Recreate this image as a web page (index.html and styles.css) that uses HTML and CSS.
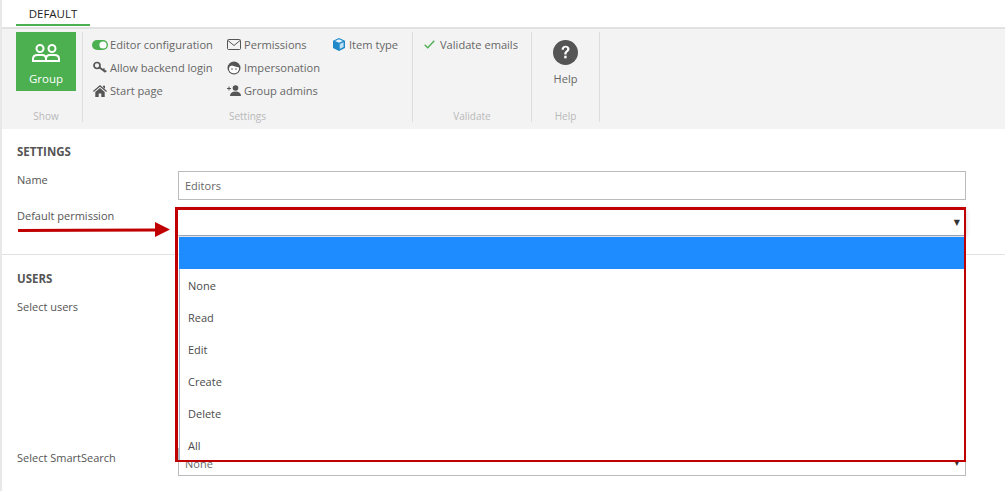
FILE: index.html
```html
<!DOCTYPE html>
<html lang="en">
<head>
<meta charset="utf-8">
<title>Group</title>
<link rel="stylesheet" href="styles.css">
</head>
<body>
<div class="page">
  <div class="tabs"><div class="tab">DEFAULT</div></div>
  <div class="ribbon">
    <section class="group g-show">
      <div class="group-body">
        <button class="big-green">
          <svg width="28" height="18" viewBox="0 0 28 18" fill="none" stroke="#fff" stroke-width="2">
            <circle cx="8" cy="4.500" r="3.500"/><circle cx="20" cy="4.500" r="3.500"/>
            <path d="M1 17v-2c0-2.500 2-4 4.500-4H10c2.500 0 4 1.500 4 4v2H1zM14 15c0-2.500 1.500-4 4-4h4.500c2.500 0 4.500 1.500 4.500 4v2H14"/>
          </svg>
          <span>Group</span>
        </button>
      </div>
      <div class="group-label">Show</div>
    </section>
    <section class="group g-settings">
      <div class="group-body cols">
        <div class="col c1">
          <div class="item"><svg class="ic" width="16" height="10" viewBox="0 0 16 10"><rect width="16" height="10" rx="5" fill="#4caf50"/><circle cx="11" cy="5" r="3.6" fill="#fff"/></svg>Editor configuration</div>
          <div class="item"><svg class="ic" width="15" height="13" viewBox="0 0 15 13" fill="none" stroke="#555" stroke-width="1.700"><circle cx="4.500" cy="4.500" r="3"/><path d="M7 6.500l6 4.500M10.500 9.300l1.500-1.800M12.700 10.800l1-1.300"/></svg>Allow backend login</div>
          <div class="item"><svg class="ic" width="14" height="12" viewBox="0 0 14 12" fill="#555"><path d="M7 0l7 6-.8 1L7 1.800 .8 7 0 6zM10 .8h2v3l-2-1.700zM2.300 7L7 3l4.700 4v5H8.300V8.500H5.700V12H2.300z"/></svg>Start page</div>
        </div>
        <div class="col c2">
          <div class="item"><svg class="ic" width="14" height="11" viewBox="0 0 14 11" fill="none" stroke="#555" stroke-width="1"><rect x=".5" y=".5" width="13" height="10" rx="1"/><path d="M1 1.500l6 5 6-5"/></svg>Permissions</div>
          <div class="item"><svg class="ic" width="14" height="14" viewBox="0 0 14 14"><circle cx="7" cy="7" r="6.500" fill="#555"/><path d="M2 8c0-2 1-3.200 3-3.500C6.500 5.500 9.500 5.500 12 6.500 12.500 10 10 12.300 7 12.300S2 10.500 2 8z" fill="#fff"/><circle cx="5" cy="8" r=".8" fill="#555"/><circle cx="9" cy="8" r=".8" fill="#555"/></svg>Impersonation</div>
          <div class="item"><svg class="ic" width="14" height="11" viewBox="0 0 14 11" fill="#555"><circle cx="8.500" cy="3" r="2.800"/><path d="M3 11c0-3 2-4.500 5.500-4.500S14 8 14 11zM0 3h1.500V1.500h1V3H4v1H2.500v1.500h-1V4H0z"/></svg>Group admins</div>
        </div>
        <div class="col c3">
          <div class="item"><svg class="ic" width="13" height="13" viewBox="0 0 13 13"><path d="M6.500 0L12.500 2.800v7.200L6.500 13 .5 10V2.800z" fill="#1e88c9"/><path d="M6.500 1.300l4 1.700-4 1.800-4-1.800z" fill="#e8f4fb"/><path d="M7.200 6v5l3.900-1.900V4.200z" fill="#bfe0f3"/></svg>Item type</div>
        </div>
      </div>
      <div class="group-label">Settings</div>
    </section>
    <section class="group g-validate">
      <div class="group-body">
        <div class="item"><svg class="check" width="11" height="9" viewBox="0 0 11 9" fill="none" stroke="#4caf50" stroke-width="1.300"><path d="M.7 4.800l3 3L10.300 .7"/></svg>Validate emails</div>
      </div>
      <div class="group-label">Validate</div>
    </section>
    <section class="group g-help">
      <div class="group-body help-body">
        <svg width="25" height="25" viewBox="0 0 25 25"><circle cx="12.500" cy="12.500" r="12.500" fill="#555"/><path d="M8.600 9.700c0-2.600 1.700-4 4-4s3.900 1.300 3.900 3.300c0 2.700-3 2.800-3 5.400h-2.200c0-3.500 2.900-3.500 2.900-5.300 0-.9-.7-1.500-1.600-1.500-1 0-1.700.7-1.800 2.100z" fill="#fff"/><rect x="11.200" y="15.700" width="2.400" height="2.600" fill="#fff"/></svg>
        <span>Help</span>
      </div>
      <div class="group-label">Help</div>
    </section>
  </div>

  <main class="content">
    <section class="form-section settings">
      <h2>SETTINGS</h2>
      <div class="row row-name">
        <label>Name</label>
        <div class="field input">Editors</div>
      </div>
      <div class="row row-perm">
        <label>Default permission</label>
        <div class="select-wrap">
          <div class="field select open"><span class="caret">▼</span></div>
          <ul class="options">
            <li class="selected"></li>
            <li>None</li>
            <li>Read</li>
            <li>Edit</li>
            <li>Create</li>
            <li>Delete</li>
            <li>All</li>
          </ul>
          <div class="red-frame"></div>
        </div>
      </div>
      <svg class="arrow" width="152" height="16" viewBox="0 0 152 16"><path d="M0 7L60 6.800l77-.3V0l15 7.500L137 15V9.500L60 9.800 0 10z" fill="#c00000"/></svg>
    </section>
    <section class="form-section users">
      <h2>USERS</h2>
      <div class="row row-users"><label>Select users</label></div>
      <div class="row row-smart">
        <label>Select SmartSearch</label>
        <div class="field select">None<span class="caret">▼</span></div>
      </div>
    </section>
  </main>
</div>
</body>
</html>
```
FILE: styles.css
```css
* { box-sizing: border-box; }
html, body { margin: 0; height: 100%; overflow: hidden; background: #fff; }
body {
  font-family: "Open Sans", "Noto Sans", "Liberation Sans", sans-serif;
  font-size: 11px;
  color: #555;
}
.page { width: 1005px; height: 491px; border-left: 2px solid #e8e8e8; overflow: hidden; }

.tabs { height: 29px; border-bottom: 2px solid #e2e2e2; padding-left: 14px; display: flex; }
.tab {
  width: 74px; height: 26px; border-bottom: 2px solid #4caf50;
  font-size: 11.500px; color: #222; text-align: center; line-height: 27px;
}

.ribbon { height: 100px; background: #f3f3f3; padding-top: 3px; display: flex; align-items: flex-start; }
.group { height: 90px; border-right: 1px solid #ddd; display: flex; flex-direction: column; }
.group-body { height: 78px; }
.group-label { height: 12px; font-size: 10px; line-height: 12px; color: #b9b9b9; text-align: center; }

.g-show { width: 81px; padding-left: 14px; }
.g-show .group-label { width: 60px; }
.g-settings { width: 330px; }
.g-validate { width: 119px; }
.g-help { width: 68px; }

.big-green {
  width: 60px; height: 59px; padding: 12px 0 0; border: 0; background: #4caf50; color: #fff;
  font: 500 11.500px/16px "Open Sans", sans-serif;
  display: flex; flex-direction: column; align-items: center; gap: 9px;
}
.cols { display: flex; padding-left: 9px; }
.col { display: flex; flex-direction: column; }
.c1 { width: 134px; }
.c2 { width: 105px; }
.item { height: 23px; display: flex; align-items: center; white-space: nowrap; color: #666; font-size: 11.100px; }
.cols .col .item:first-child { margin-top: 1px; }
.ic { width: 16px; margin-right: 2px; flex: none; }
.g-validate .group-body { padding: 1px 0 0 11px; }
.check { margin-right: 5px; flex: none; }

.help-body { display: flex; flex-direction: column; align-items: center; padding-top: 8px; gap: 6px; color: #666; }

.form-section { position: relative; }
h2 { margin: 0; font-size: 11.500px; font-weight: 700; color: #555; line-height: 16px; }
.settings { height: 126px; padding: 15px 0 0 15px; border-bottom: 1px solid #e2e2e2; }
.row { display: flex; align-items: flex-start; }
.row label { width: 161px; flex: none; line-height: 16px; }
.row-name { margin-top: 11px; height: 37px; }
.row-name label { margin-top: 1px; }
.field { width: 788px; height: 29px; border: 1px solid #bbb; background: #fff; color: #666; line-height: 27px; padding-left: 6px; position: relative; }
.select-wrap { width: 788px; position: relative; z-index: 2; }
.select { height: 28px; }
.select.open { border-color: #fff; box-shadow: 0 1px 5px rgba(0,0,0,.2); border-bottom: 1px solid #9aa4b8; }
.caret { position: absolute; right: 5px; top: 0; font-size: 8px; color: #333; line-height: 28px; font-family: "DejaVu Sans", sans-serif; }
.options {
  list-style: none; margin: 0; padding: 0; position: absolute; left: 1px; top: 29px; width: 786px; background: #fff;
}
.options li { height: 32px; line-height: 34px; padding-left: 8px; color: #4a4a4a; border-left: 1px solid #9db4d0; }
.options li.selected { background: #1e8cff; border-left-color: #1e8cff; }
.red-frame { position: absolute; left: -3px; top: -1px; width: 791px; height: 255px; border: solid #c00000; border-width: 3px 2px 2px 3px; }
.arrow { position: absolute; left: 16px; top: 93px; }
.users { padding: 16px 0 0 15px; }
.row-users { margin-top: 12px; height: 149px; }
.row-smart { height: 28px; }
.row-smart label { margin-top: 2px; }
.row-smart .field { line-height: 30px; }
```
